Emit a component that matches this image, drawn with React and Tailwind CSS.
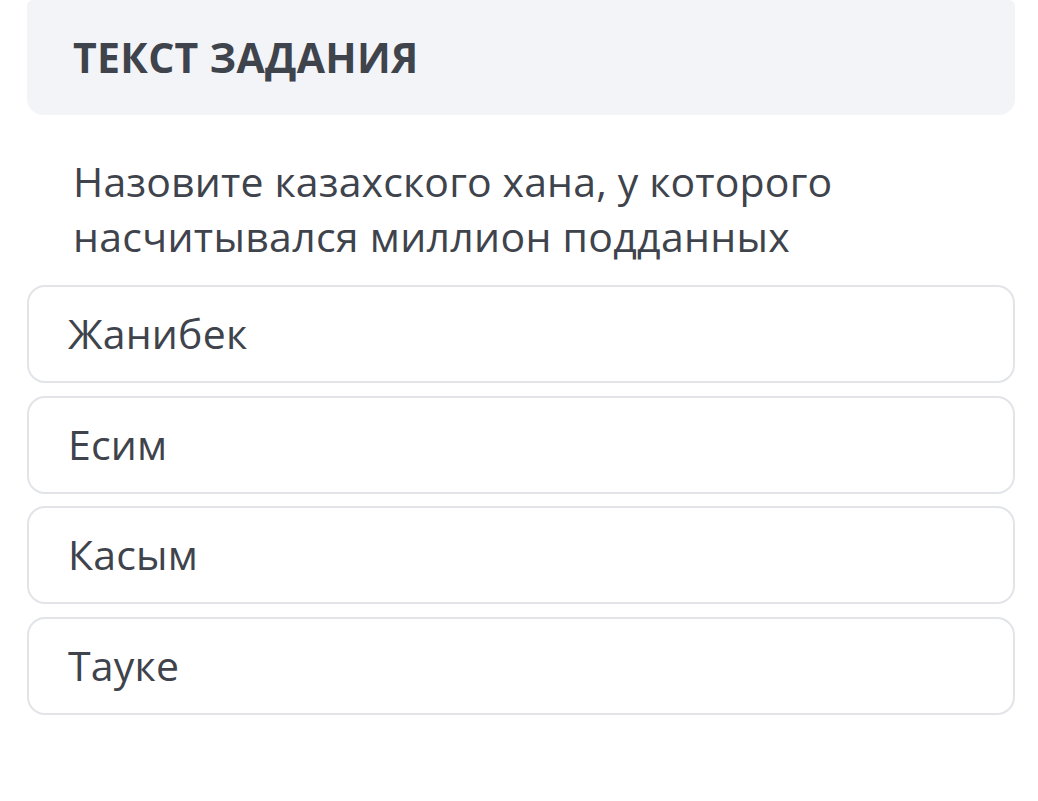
export default function App() {
  const options = ['Жанибек', 'Есим', 'Касым', 'Тауке']

  return (
    <div className="min-h-screen bg-white pl-[27px] pr-[23px] text-[#3e434c]" style={{ fontFamily: '"Open Sans", sans-serif' }}>
      {/* Header */}
      <div className="flex h-[115px] items-center rounded-b-[16px] rounded-t-[6px] bg-[#f3f4f8] pl-[46px]">
        <h2 className="text-[41px] font-bold leading-none tracking-[0.3px]">ТЕКСТ ЗАДАНИЯ</h2>
      </div>

      {/* Question */}
      <p className="mt-[39px] pl-[46px] text-[41px] leading-[55px] tracking-[0.15px]">
        Назовите казахского хана, у которого
        <br />
        <span className="tracking-[0.3px]">насчитывался миллион подданных</span>
      </p>

      {/* Options */}
      <div className="mt-[21px] flex flex-col gap-[12.5px]">
        {options.map((opt) => (
          <div
            key={opt}
            className="flex h-[98px] items-center rounded-[18px] border-2 border-[#e2e4e8] bg-white pl-[39px] text-[41px] tracking-[0.2px]"
          >
            {opt}
          </div>
        ))}
      </div>
    </div>
  )
}
